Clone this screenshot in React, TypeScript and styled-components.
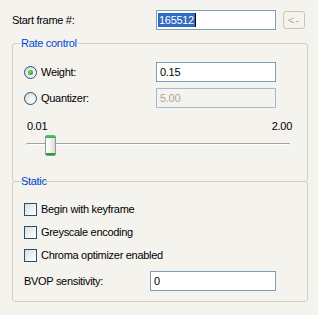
import React, { FC } from 'react';
import styled, { createGlobalStyle } from 'styled-components';

const GlobalStyle = createGlobalStyle`
  html, body {
    margin: 0;
    padding: 0;
    background: #f4f3ee;
  }
`;

const Panel = styled.div`
  width: 318px;
  height: 315px;
  box-sizing: border-box;
  padding: 10px 11px 0 12px;
  background: #f4f3ee;
  font-family: 'Liberation Sans', Arial, sans-serif;
  font-size: 11px;
  line-height: 13px;
  letter-spacing: -0.3px;
  color: #000;
`;

const TopRow = styled.div`
  display: flex;
  align-items: center;
  height: 20px;
  margin-bottom: 7px;
`;

const Label = styled.div<{ width: number }>`
  width: ${props => props.width}px;
  flex-shrink: 0;
  white-space: nowrap;
`;

const Field = styled.div<{ width: number; disabled?: boolean }>`
  width: ${props => props.width}px;
  height: 20px;
  box-sizing: border-box;
  border: 1px solid ${props => (props.disabled ? '#a4b9cc' : '#7f9db9')};
  background: ${props => (props.disabled ? '#f4f3ee' : '#fff')};
  color: ${props => (props.disabled ? '#aca899' : '#000')};
  padding: 0 3px;
  display: flex;
  align-items: center;
  flex-shrink: 0;
`;

const Selected = styled.span`
  background: #316ac5;
  color: #fff;
  padding: 0 1px;
  margin-left: -2px;
  line-height: 14px;
`;

const Caret = styled.span`
  display: inline-block;
  width: 1px;
  height: 14px;
  background: #000;
`;

const SmallButton = styled.div`
  width: 22px;
  height: 18px;
  box-sizing: border-box;
  margin-left: 7px;
  border: 1px solid #c9c7ba;
  border-radius: 3px;
  background: #f5f4ea;
  color: #aca899;
  display: flex;
  align-items: center;
  justify-content: center;
  letter-spacing: 1px;
`;

const Group = styled.fieldset<{ overlap?: boolean }>`
  width: 296px;
  box-sizing: border-box;
  margin: ${props => (props.overlap ? '-7px' : '0')} 0 0 0;
  padding: 0;
  min-width: 0;
  border: 1px solid #d0d0bf;
  border-radius: 3px;
`;

const Legend = styled.legend`
  margin-left: 7px;
  padding: 0 1px;
  color: #0046d5;
  line-height: 13px;
`;

const GroupBody = styled.div<{ top: number; bottom: number }>`
  padding: ${props => props.top}px 0 ${props => props.bottom}px 11px;
`;

const OptionRow = styled.div<{ gap?: number }>`
  display: flex;
  align-items: center;
  height: 20px;
  margin-top: ${props => props.gap || 0}px;
`;

const CheckRow = styled.div`
  display: flex;
  align-items: center;
  height: 17px;
  margin-bottom: 6px;
`;

const Choice = styled.label`
  width: 132px;
  display: flex;
  align-items: center;
  flex-shrink: 0;
`;

const Radio = styled.span<{ checked?: boolean }>`
  width: 13px;
  height: 13px;
  box-sizing: border-box;
  border: 1px solid #1c5180;
  border-radius: 50%;
  margin-right: 4px;
  background: radial-gradient(circle at 70% 70%, #fff 0, #f0f0ea 40%, #d8d7d0 100%);
  display: flex;
  align-items: center;
  justify-content: center;

  &::after {
    content: '';
    display: ${props => (props.checked ? 'block' : 'none')};
    width: 5px;
    height: 5px;
    border-radius: 50%;
    background: radial-gradient(circle at 40% 40%, #7be07b 0, #21a121 70%);
  }
`;

const Box = styled.span`
  width: 13px;
  height: 13px;
  box-sizing: border-box;
  border: 1px solid #1c5180;
  margin-right: 4px;
  background: linear-gradient(135deg, #dcdcd7 0%, #f6f6f3 70%, #fff 100%);
  flex-shrink: 0;
`;

const ScaleLabels = styled.div`
  display: flex;
  justify-content: space-between;
  margin: 12px 15px 0 3px;
`;

const SliderBody = styled.div`
  position: relative;
  width: 264px;
  height: 21px;
  margin: 2px 0 0 2px;
`;

const Track = styled.div`
  position: relative;
  top: 8px;
  height: 1px;
  border-top: 1px solid #a3a29c;
  border-left: 1px solid #c9c8c0;
  border-radius: 1px;
  background: #fff;
`;

const Thumb = styled.div`
  position: absolute;
  top: 0;
  width: 11px;
  height: 21px;
  box-sizing: border-box;
  border: 1px solid #8c9aa6;
  border-radius: 2px;
  background:
    linear-gradient(to bottom, #3fd33f 0, #21b521 2px, transparent 2px, transparent 17px, #27b027 17px, #1a9a1a 19px),
    linear-gradient(to right, #fff 0, #f3f3ef 50%, #dcdbd4 100%);
`;

const Slider: FC<{ min: number; max: number; value: number }> = ({ min, max, value }) => {
  const left = Math.round(((value - min) / (max - min)) * (264 - 11)) + 1;
  return (
    <SliderBody>
      <Track />
      <Thumb style={{ left }} />
    </SliderBody>
  );
};

const Check: FC<{ text: string }> = ({ text }) => (
  <CheckRow>
    <Box />
    {text}
  </CheckRow>
);

const App: FC = () => (
  <>
    <GlobalStyle />
    <Panel>
      <TopRow>
        <Label width={144}>Start frame #:</Label>
        <Field width={120}>
          <Selected>165512</Selected>
          <Caret />
        </Field>
        <SmallButton>&lt;-</SmallButton>
      </TopRow>

      <Group>
        <Legend>Rate control</Legend>
        <GroupBody top={12} bottom={25}>
          <OptionRow>
            <Choice>
              <Radio checked />
              Weight:
            </Choice>
            <Field width={120}>0.15</Field>
          </OptionRow>
          <OptionRow gap={6}>
            <Choice>
              <Radio />
              Quantizer:
            </Choice>
            <Field width={120} disabled>
              5.00
            </Field>
          </OptionRow>
          <ScaleLabels>
            <span>0.01</span>
            <span>2.00</span>
          </ScaleLabels>
          <Slider min={0.01} max={2} value={0.15} />
        </GroupBody>
      </Group>

      <Group overlap>
        <Legend>Static</Legend>
        <GroupBody top={13} bottom={10}>
          <Check text="Begin with keyframe" />
          <Check text="Greyscale encoding" />
          <Check text="Chroma optimizer enabled" />
          <OptionRow gap={7}>
            <Label width={126}>BVOP sensitivity:</Label>
            <Field width={126}>0</Field>
          </OptionRow>
        </GroupBody>
      </Group>
    </Panel>
  </>
);

export default App;
